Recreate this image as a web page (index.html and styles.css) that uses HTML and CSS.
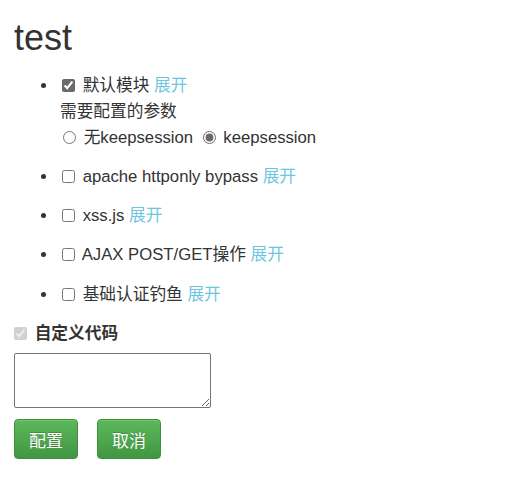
FILE: index.html
```html
<!DOCTYPE html>
<html>
<head>
<meta charset="utf-8">
<link rel="stylesheet" href="styles.css">
</head>
<body>
<div class="page">
  <h1 class="title">test</h1>
  <ul class="mods">
    <li class="mod">
      <div class="row"><input type="checkbox" class="cb" checked> 默认模块 <a class="more">展开</a></div>
      <div class="row params">需要配置的参数</div>
      <div class="row radios"><label><input type="radio" name="ks" class="rb"> 无keepsession</label> <label><input type="radio" name="ks" class="rb" checked> keepsession</label></div>
    </li>
    <li class="mod"><div class="row"><input type="checkbox" class="cb"> apache httponly bypass <a class="more">展开</a></div></li>
    <li class="mod"><div class="row"><input type="checkbox" class="cb"> xss.js <a class="more">展开</a></div></li>
    <li class="mod"><div class="row"><input type="checkbox" class="cb"> AJAX POST/GET操作 <a class="more">展开</a></div></li>
    <li class="mod"><div class="row"><input type="checkbox" class="cb"> 基础认证钓鱼 <a class="more">展开</a></div></li>
  </ul>
  <div class="row custom"><input type="checkbox" class="cb cb-custom" checked disabled> <strong>自定义代码</strong></div>
  <div class="code-wrap"><textarea class="code"></textarea></div>
  <div class="actions">
    <button class="btn">配置</button>
    <button class="btn">取消</button>
  </div>
</div>
</body>
</html>
```
FILE: styles.css
```css
html, body {
  margin: 0;
  padding: 0;
  background: #fff;
}
.page {
  padding: 0 14px;
  font-family: "Liberation Sans", Arial, "Noto Sans CJK SC", sans-serif;
  font-size: 16.7px;
  color: #333;
}
.title {
  font-size: 36px;
  font-weight: 500;
  line-height: 1.1;
  margin: 18px 0 15px;
}
.mods {
  margin: 0;
  padding: 0 0 0 44px;
}
.mod {
  margin-bottom: 13.3px;
}
.row {
  line-height: 26px;
}
.params {
  padding-left: 2px;
}
.cb, .rb {
  accent-color: #6a6a6a;
  width: 13px;
  height: 13px;
  vertical-align: -1px;
}
.cb {
  margin: 0 3px 0 4px;
}
.rb {
  margin: 0 3px 0 5px;
}
.more {
  color: #6cc6e0;
  text-decoration: none;
}
.custom .cb-custom {
  margin-left: 0;
}
.custom strong {
  font-weight: 700;
}
.code-wrap {
  margin-top: 6px;
  line-height: 0;
}
.code {
  box-sizing: border-box;
  width: 197px;
  height: 55px;
  margin: 0;
  border: 1px solid #767676;
  border-radius: 2px;
}
.actions {
  display: flex;
  gap: 19px;
  margin-top: 11px;
}
.btn {
  box-sizing: border-box;
  width: 64px;
  height: 40px;
  padding: 0;
  font-family: "Liberation Sans", Arial, "Noto Sans CJK SC", sans-serif;
  font-size: 17px;
  color: #fff;
  border: 1px solid #3e8f3e;
  border-radius: 4px;
  background: linear-gradient(to bottom, #5cb85c 0%, #419641 100%);
  box-shadow: inset 0 1px 0 rgba(255,255,255,.15), 0 1px 1px rgba(0,0,0,.075);
  text-shadow: 0 -1px 0 rgba(0,0,0,.2);
}
```
